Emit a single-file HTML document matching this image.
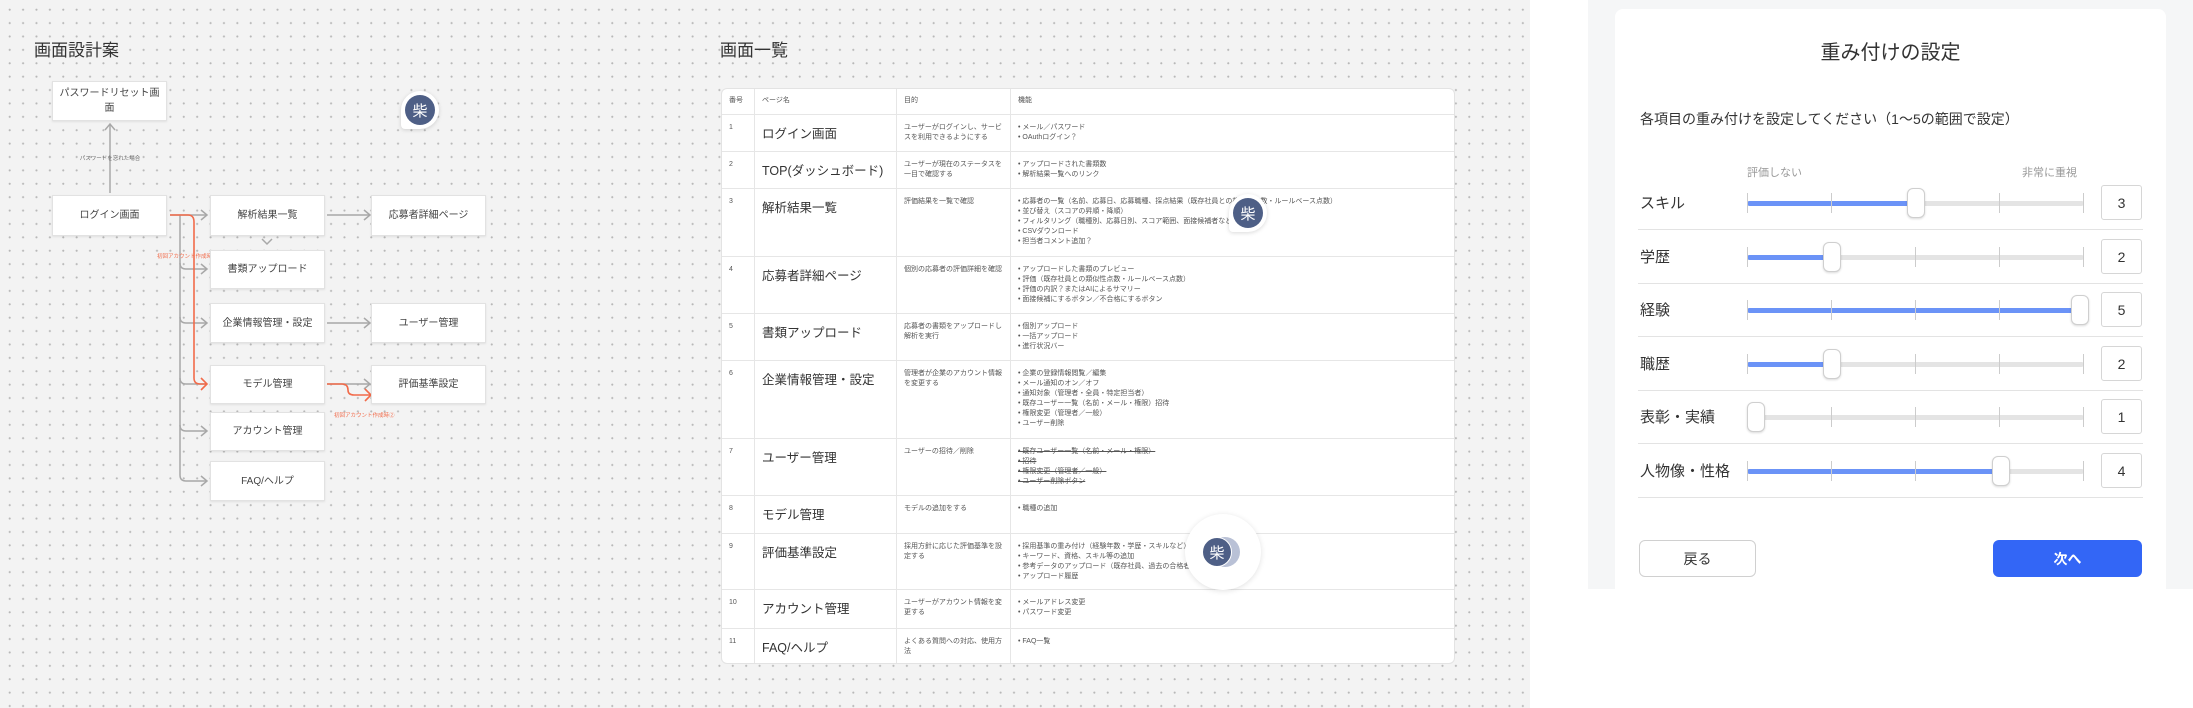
<!DOCTYPE html>
<html><head><meta charset="utf-8">
<style>
*{margin:0;padding:0;box-sizing:border-box}
body{width:2193px;height:708px;overflow:hidden;position:relative;background:#fff;font-family:"Liberation Sans","Noto Sans CJK JP",sans-serif;color:#333}
.canvas{position:absolute;left:0;top:0;width:1530px;height:708px;background-color:#f3f3f3;background-image:radial-gradient(circle,#b8b8b8 0.9px,transparent 1.2px);background-size:13.4px 13.4px;background-position:3px 3px}
.a{position:absolute}
.box{position:absolute;background:#fff;border:1px solid #e2e2e2;box-shadow:0 1px 2px rgba(0,0,0,.08);display:flex;align-items:center;justify-content:center;text-align:center;font-size:10px;color:#444;line-height:15px}
.h1{position:absolute;font-size:17px;color:#333}
.av{position:absolute;width:30px;height:30px;border-radius:50%;background:#4e5f86;color:#fff;font-size:15px;display:flex;align-items:center;justify-content:center}
.tbl{position:absolute;left:721px;top:88px;width:734px;height:576px;background:#fff;border:1px solid #e3e3e3;border-radius:6px;overflow:hidden}
.row{position:absolute;left:0;width:100%;border-top:1px solid #e6e6e6}
.c{position:absolute;top:0;bottom:0;border-left:1px solid #e6e6e6}
.t{position:absolute;font-size:7px;color:#555;line-height:10px;white-space:nowrap}
.pn{position:absolute;font-size:12.5px;color:#333;white-space:nowrap}
.panel{position:absolute;left:1588px;top:0;width:605px;height:589px;background:#f5f6f7}
.card{position:absolute;left:1615px;top:9px;width:551px;height:580px;background:#fff;border-radius:8px 8px 0 0}
.lbl{position:absolute;left:1640px;font-size:15px;color:#333}
.track{position:absolute;left:1747px;width:337px;height:5px;background:#e4e4e4;border-radius:3px}
.fill{position:absolute;left:0;top:0;height:5px;background:#6b93f7;border-radius:3px}
.tick{position:absolute;width:1px;height:20px;background:#ccc}
.thumb{position:absolute;width:18px;height:30px;background:#fff;border:1px solid #cfcfcf;border-radius:6px;box-shadow:0 1px 2px rgba(0,0,0,.15)}
.val{position:absolute;left:2101px;width:41px;height:35px;border:1px solid #d6d6d6;border-radius:3px;font-size:14px;display:flex;align-items:center;justify-content:center;color:#333}
.sep{position:absolute;left:1638px;width:505px;height:1px;background:#e3e3e3}
</style></head><body>
<div class="canvas"></div>

<!-- Left flow -->
<div class="h1" style="left:34px;top:36px">画面設計案</div>
<svg class="a" style="left:0;top:0" width="700" height="708">
<g fill="none" stroke="#a8a8a8" stroke-width="1.5">
<path d="M110 193 V125"/><path d="M105 130 L110 124 L115 130"/>
<path d="M170 215 H206"/><path d="M201 210 L207 215 L201 220"/>
<path d="M180 215 V475 Q180 481 186 481 H206"/>
<path d="M180 263 Q180 269 186 269 H206"/><path d="M201 264 L207 269 L201 274"/>
<path d="M180 317 Q180 323 186 323 H206"/><path d="M201 318 L207 323 L201 328"/>
<path d="M180 378 Q180 384 186 384 H206"/>
<path d="M180 425 Q180 431 186 431 H206"/><path d="M201 426 L207 431 L201 436"/>
<path d="M201 476 L207 481 L201 486"/>
<path d="M327 215 H369"/><path d="M364 210 L370 215 L364 220"/>
<path d="M327 323 H369"/><path d="M364 318 L370 323 L364 328"/>
<path d="M327 384 H369"/><path d="M364 379 L370 384 L364 389"/>
<path d="M262 239 L267 244 L272 239"/>
</g>
<g fill="none" stroke="#f26b4a" stroke-width="1.6">
<path d="M170 215 H188 Q194 215 194 222 V378 Q194 384 200 384 H207"/><path d="M201 378 L207 384 L201 390"/>
<path d="M327 384 H342 Q348 384 348 390 V390 Q348 395 354 395 H371"/><path d="M365 389 L371 395 L365 401"/>
</g>
<text x="110" y="160" font-size="5.5" fill="#666" text-anchor="middle" font-family="Liberation Sans,Noto Sans CJK JP,sans-serif">パスワードを忘れた場合</text>
<text x="157" y="258" font-size="5.5" fill="#f26b4a" font-family="Liberation Sans,Noto Sans CJK JP,sans-serif">初回アカウント作成時①</text>
<text x="334" y="417" font-size="5.5" fill="#f26b4a" font-family="Liberation Sans,Noto Sans CJK JP,sans-serif">初回アカウント作成時②</text>
</svg>
<div class="box" style="left:52px;top:81px;width:115px;height:40px;padding:0 4px">パスワードリセット画面</div>
<div class="box" style="left:52px;top:195px;width:115px;height:41px">ログイン画面</div>
<div class="box" style="left:210px;top:195px;width:115px;height:41px">解析結果一覧</div>
<div class="box" style="left:210px;top:250px;width:115px;height:39px">書類アップロード</div>
<div class="box" style="left:210px;top:303px;width:115px;height:40px">企業情報管理・設定</div>
<div class="box" style="left:210px;top:365px;width:115px;height:39px">モデル管理</div>
<div class="box" style="left:210px;top:412px;width:115px;height:39px">アカウント管理</div>
<div class="box" style="left:210px;top:461px;width:115px;height:40px">FAQ/ヘルプ</div>
<div class="box" style="left:371px;top:195px;width:115px;height:41px">応募者詳細ページ</div>
<div class="box" style="left:371px;top:303px;width:115px;height:40px">ユーザー管理</div>
<div class="box" style="left:371px;top:365px;width:115px;height:39px">評価基準設定</div>
<div class="a" style="left:401px;top:91px;width:38px;height:38px;border-radius:50% 50% 50% 4px;background:#fff;box-shadow:0 1px 4px rgba(0,0,0,.15)"></div>
<div class="av" style="left:405px;top:95px">柴</div>

<!-- Table -->
<div class="h1" style="left:720px;top:36px">画面一覧</div>
<div class="tbl">
<div class="c" style="left:32px"></div><div class="c" style="left:174px"></div><div class="c" style="left:288px"></div>
<div class="row" style="top:25px"></div><div class="row" style="top:62px"></div><div class="row" style="top:99px"></div><div class="row" style="top:167px"></div><div class="row" style="top:224px"></div><div class="row" style="top:271px"></div><div class="row" style="top:349px"></div><div class="row" style="top:406px"></div><div class="row" style="top:444px"></div><div class="row" style="top:500px"></div><div class="row" style="top:539px"></div>
</div>
<div class="a" style="left:721px;top:88px;width:734px;height:576px">
<div class="t" style="left:8px;top:8px">番号</div><div class="t" style="left:41px;top:8px">ページ名</div><div class="t" style="left:183px;top:8px">目的</div><div class="t" style="left:297px;top:8px">機能</div>

<div class="t" style="left:8px;top:35px">1</div><div class="pn" style="left:41px;top:35px">ログイン画面</div>
<div class="t" style="left:183px;top:35px">ユーザーがログインし、サービ<br>スを利用できるようにする</div>
<div class="t" style="left:297px;top:35px">• メール／パスワード<br>• OAuthログイン？</div>

<div class="t" style="left:8px;top:72px">2</div><div class="pn" style="left:41px;top:72px">TOP(ダッシュボード)</div>
<div class="t" style="left:183px;top:72px">ユーザーが現在のステータスを<br>一目で確認する</div>
<div class="t" style="left:297px;top:72px">• アップロードされた書類数<br>• 解析結果一覧へのリンク</div>

<div class="t" style="left:8px;top:109px">3</div><div class="pn" style="left:41px;top:109px">解析結果一覧</div>
<div class="t" style="left:183px;top:109px">評価結果を一覧で確認</div>
<div class="t" style="left:297px;top:109px">• 応募者の一覧（名前、応募日、応募職種、採点結果（既存社員との相似性点数・ルールベース点数）<br>• 並び替え（スコアの昇順・降順）<br>• フィルタリング（職種別、応募日別、スコア範囲、面接候補者など）<br>• CSVダウンロード<br>• 担当者コメント追加？</div>

<div class="t" style="left:8px;top:177px">4</div><div class="pn" style="left:41px;top:177px">応募者詳細ページ</div>
<div class="t" style="left:183px;top:177px">個別の応募者の評価詳細を確認</div>
<div class="t" style="left:297px;top:177px">• アップロードした書類のプレビュー<br>• 評価（既存社員との類似性点数・ルールベース点数）<br>• 評価の内訳？またはAIによるサマリー<br>• 面接候補にするボタン／不合格にするボタン</div>

<div class="t" style="left:8px;top:234px">5</div><div class="pn" style="left:41px;top:234px">書類アップロード</div>
<div class="t" style="left:183px;top:234px">応募者の書類をアップロードし<br>解析を実行</div>
<div class="t" style="left:297px;top:234px">• 個別アップロード<br>• 一括アップロード<br>• 進行状況バー</div>

<div class="t" style="left:8px;top:281px">6</div><div class="pn" style="left:41px;top:281px">企業情報管理・設定</div>
<div class="t" style="left:183px;top:281px">管理者が企業のアカウント情報<br>を変更する</div>
<div class="t" style="left:297px;top:281px">• 企業の登録情報閲覧／編集<br>• メール通知のオン／オフ<br>• 通知対象（管理者・全員・特定担当者）<br>• 既存ユーザー一覧（名前・メール・権限）招待<br>• 権限変更（管理者／一般）<br>• ユーザー削除</div>

<div class="t" style="left:8px;top:359px">7</div><div class="pn" style="left:41px;top:359px">ユーザー管理</div>
<div class="t" style="left:183px;top:359px">ユーザーの招待／削除</div>
<div class="t" style="left:297px;top:359px;text-decoration:line-through">• 既存ユーザー一覧（名前・メール・権限）<br>• 招待<br>• 権限変更（管理者／一般）<br>• ユーザー削除ボタン</div>

<div class="t" style="left:8px;top:416px">8</div><div class="pn" style="left:41px;top:416px">モデル管理</div>
<div class="t" style="left:183px;top:416px">モデルの追加をする</div>
<div class="t" style="left:297px;top:416px">• 職種の追加</div>

<div class="t" style="left:8px;top:454px">9</div><div class="pn" style="left:41px;top:454px">評価基準設定</div>
<div class="t" style="left:183px;top:454px">採用方針に応じた評価基準を設<br>定する</div>
<div class="t" style="left:297px;top:454px">• 採用基準の重み付け（経験年数・学歴・スキルなど）<br>• キーワード、資格、スキル等の追加<br>• 参考データのアップロード（既存社員、過去の合格者）<br>• アップロード履歴</div>

<div class="t" style="left:8px;top:510px">10</div><div class="pn" style="left:41px;top:510px">アカウント管理</div>
<div class="t" style="left:183px;top:510px">ユーザーがアカウント情報を変<br>更する</div>
<div class="t" style="left:297px;top:510px">• メールアドレス変更<br>• パスワード変更</div>

<div class="t" style="left:8px;top:549px">11</div><div class="pn" style="left:41px;top:549px">FAQ/ヘルプ</div>
<div class="t" style="left:183px;top:549px">よくある質問への対応、使用方<br>法</div>
<div class="t" style="left:297px;top:549px">• FAQ一覧</div>
</div>
<div class="a" style="left:1229px;top:194px;width:38px;height:38px;border-radius:50% 50% 50% 4px;background:#fff;box-shadow:0 1px 4px rgba(0,0,0,.15)"></div>
<div class="av" style="left:1233px;top:198px">柴</div>
<div class="a" style="left:1185px;top:514px;width:76px;height:76px;border-radius:50%;background:#fff;box-shadow:0 1px 6px rgba(0,0,0,.12)"></div>
<div class="a" style="left:1210px;top:537px;width:30px;height:30px;border-radius:50%;background:#b9c1d6"></div>
<div class="av" style="left:1202px;top:537px;border:1px solid #fff">柴</div>

<!-- Right panel -->
<div class="panel"></div>
<div class="card"></div>
<div class="a" style="left:1615px;top:36px;width:551px;text-align:center;font-size:20px;color:#333">重み付けの設定</div>
<div class="a" style="left:1640px;top:109px;font-size:14px;color:#333">各項目の重み付けを設定してください（1〜5の範囲で設定）</div>
<div class="a" style="left:1747px;top:164px;font-size:11px;color:#999">評価しない</div>
<div class="a" style="left:2022px;top:164px;font-size:11px;color:#999">非常に重視</div>

<div class="lbl" style="top:192px">スキル</div>
<div class="track" style="top:201px"><div class="fill" style="width:168px"></div></div>
<div class="tick" style="left:1747px;top:193px"></div><div class="tick" style="left:1831px;top:193px"></div><div class="tick" style="left:1915px;top:193px"></div><div class="tick" style="left:1999px;top:193px"></div><div class="tick" style="left:2083px;top:193px"></div>
<div class="thumb" style="left:1907px;top:188px"></div>
<div class="val" style="top:185px">3</div>
<div class="sep" style="top:229px"></div>

<div class="lbl" style="top:246px">学歴</div>
<div class="track" style="top:255px"><div class="fill" style="width:84px"></div></div>
<div class="tick" style="left:1747px;top:247px"></div><div class="tick" style="left:1831px;top:247px"></div><div class="tick" style="left:1915px;top:247px"></div><div class="tick" style="left:1999px;top:247px"></div><div class="tick" style="left:2083px;top:247px"></div>
<div class="thumb" style="left:1823px;top:242px"></div>
<div class="val" style="top:239px">2</div>
<div class="sep" style="top:283px"></div>

<div class="lbl" style="top:299px">経験</div>
<div class="track" style="top:308px"><div class="fill" style="width:330px"></div></div>
<div class="tick" style="left:1747px;top:300px"></div><div class="tick" style="left:1831px;top:300px"></div><div class="tick" style="left:1915px;top:300px"></div><div class="tick" style="left:1999px;top:300px"></div><div class="tick" style="left:2083px;top:300px"></div>
<div class="thumb" style="left:2071px;top:295px"></div>
<div class="val" style="top:292px">5</div>
<div class="sep" style="top:336px"></div>

<div class="lbl" style="top:353px">職歴</div>
<div class="track" style="top:362px"><div class="fill" style="width:84px"></div></div>
<div class="tick" style="left:1747px;top:354px"></div><div class="tick" style="left:1831px;top:354px"></div><div class="tick" style="left:1915px;top:354px"></div><div class="tick" style="left:1999px;top:354px"></div><div class="tick" style="left:2083px;top:354px"></div>
<div class="thumb" style="left:1823px;top:349px"></div>
<div class="val" style="top:346px">2</div>
<div class="sep" style="top:390px"></div>

<div class="lbl" style="top:406px">表彰・実績</div>
<div class="track" style="top:415px"></div>
<div class="tick" style="left:1747px;top:407px"></div><div class="tick" style="left:1831px;top:407px"></div><div class="tick" style="left:1915px;top:407px"></div><div class="tick" style="left:1999px;top:407px"></div><div class="tick" style="left:2083px;top:407px"></div>
<div class="thumb" style="left:1747px;top:402px"></div>
<div class="val" style="top:399px">1</div>
<div class="sep" style="top:443px"></div>

<div class="lbl" style="top:460px">人物像・性格</div>
<div class="track" style="top:469px"><div class="fill" style="width:252px"></div></div>
<div class="tick" style="left:1747px;top:461px"></div><div class="tick" style="left:1831px;top:461px"></div><div class="tick" style="left:1915px;top:461px"></div><div class="tick" style="left:1999px;top:461px"></div><div class="tick" style="left:2083px;top:461px"></div>
<div class="thumb" style="left:1992px;top:456px"></div>
<div class="val" style="top:453px">4</div>
<div class="sep" style="top:497px"></div>

<div class="a" style="left:1639px;top:540px;width:117px;height:37px;border:1px solid #d0d0d0;border-radius:6px;background:#fff;display:flex;align-items:center;justify-content:center;font-size:14px;color:#333">戻る</div>
<div class="a" style="left:1993px;top:540px;width:149px;height:37px;border-radius:6px;background:#3366f6;display:flex;align-items:center;justify-content:center;font-size:14px;color:#fff;font-weight:bold">次へ</div>
</body></html>
